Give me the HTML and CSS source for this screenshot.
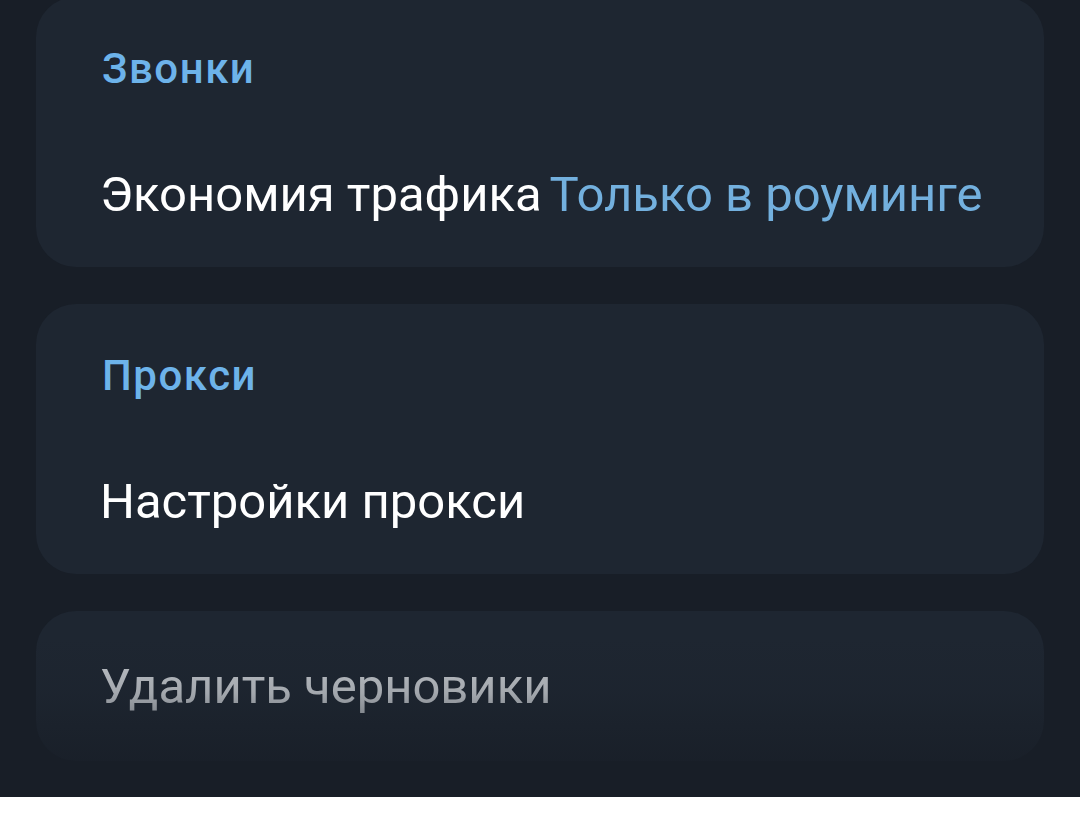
FILE: index.html
```html
<!DOCTYPE html>
<html lang="ru">
  <head>
    <meta name="viewport" content="width=device-width, initial-scale=1.0">
    <title>Данные и память</title>
    <link rel="stylesheet" href="styles.css">
  </head>
  <body>
    <div id="settings">
      <div class="card">
        <div class="card-title">Звонки</div>
        <div class="row">
          <span class="row-label">Экономия трафика</span>
          <span class="row-value">Только в роуминге</span>
        </div>
      </div>

      <div class="card">
        <div class="card-title">Прокси</div>
        <div class="row">
          <span class="row-label">Настройки прокси</span>
        </div>
      </div>

      <div class="card card-single">
        <div class="row">
          <span class="row-label row-muted">Удалить черновики</span>
        </div>
      </div>
    </div>
    <div id="nav-bar"></div>
  </body>
</html>
```

FILE: styles.css
```css
body {
  margin: 0;
  background-color: #ffffff;
  font-family: "Roboto", "Noto Sans", sans-serif;
  overflow: hidden;
}

#settings {
  position: relative;
  height: 797px;
  padding: 0 36px;
  background-color: #181e27;
  display: flex;
  flex-direction: column;
  gap: 37px;
  overflow: hidden;
}

/* fade the last card out towards the bottom edge */
#settings::after {
  content: "";
  position: absolute;
  left: 0;
  right: 0;
  bottom: 0;
  height: 160px;
  background: linear-gradient(
    rgba(24, 30, 39, 0),
    rgba(24, 30, 39, 0.2) 35%,
    rgba(24, 30, 39, 0.7) 70%,
    #181e27 95%
  );
  pointer-events: none;
}

.card {
  background-color: #1e2631;
  border-radius: 40px;
  height: 270px;
  flex-shrink: 0;
}

.card:first-child {
  margin-top: -3px;
}

.card-title {
  height: 142px;
  display: flex;
  align-items: center;
  padding-left: 66px;
  color: #6db3ea;
  font-size: 42px;
  font-weight: 500;
  letter-spacing: 1.5px;
}

.row {
  height: 110px;
  display: flex;
  align-items: center;
  padding-left: 64px;
  font-size: 49px;
  gap: 8px;
}

.row-label {
  color: #ffffff;
}

.row-value {
  color: #73b0de;
}

.card-single {
  height: 150px;
}

.card-single .row {
  height: 150px;
}

.row-muted {
  color: #c6cacf;
}

#nav-bar {
  height: 32px;
  background-color: #ffffff;
}
```
